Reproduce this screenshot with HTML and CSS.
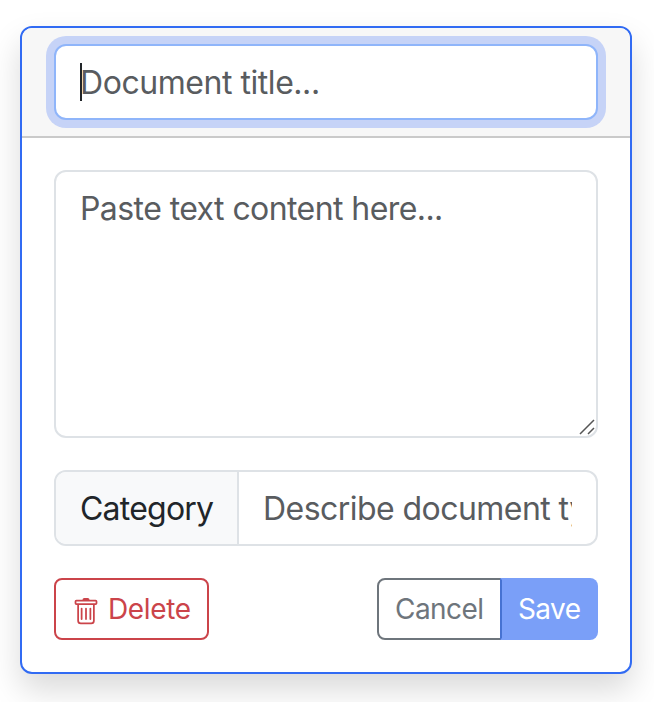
FILE: index.html
```html
<!DOCTYPE html>
<html lang="en">
<head>
<meta charset="utf-8">
<title>Document</title>
<link rel="stylesheet" href="styles.css">
</head>
<body>
<main class="card">
  <header class="card-header">
    <div class="control focused"><span class="caret"></span><span class="placeholder t-title">Document title...</span></div>
  </header>
  <div class="card-body">
    <div class="control area"><span class="placeholder t-paste">Paste text content here...</span>
      <svg class="grip" viewBox="0 0 16 16"><path d="M1 15L15 1M9 15L15 9"/></svg>
    </div>
    <div class="group">
      <div class="addon"><span class="t-category">Category</span></div>
      <div class="group-input"><div class="clip"><span class="placeholder t-describe">Describe document type</span></div></div>
    </div>
    <div class="actions">
      <button class="btn delete">
        <svg class="trash" viewBox="0 0 16 16"><path d="M5.5 5.5A.5.5 0 0 1 6 6v6a.5.5 0 0 1-1 0V6a.5.5 0 0 1 .5-.5m2.5 0a.5.5 0 0 1 .5.5v6a.5.5 0 0 1-1 0V6a.5.5 0 0 1 .5-.5m3 .5a.5.5 0 0 0-1 0v6a.5.5 0 0 0 1 0z"/><path d="M14.5 3a1 1 0 0 1-1 1H13v9a2 2 0 0 1-2 2H5a2 2 0 0 1-2-2V4h-.5a1 1 0 0 1-1-1V2a1 1 0 0 1 1-1H6a1 1 0 0 1 1-1h2a1 1 0 0 1 1 1h3.5a1 1 0 0 1 1 1zM4.118 4 4 4.059V13a1 1 0 0 0 1 1h6a1 1 0 0 0 1-1V4.059L11.882 4zM2.5 3h11V2h-11z"/></svg>
        <span class="t-delete">Delete</span>
      </button>
      <div class="btn-group">
        <button class="btn cancel"><span class="t-cancel">Cancel</span></button>
        <button class="btn save"><span class="t-save">Save</span></button>
      </div>
    </div>
  </div>
</main>
</body>
</html>
```
FILE: styles.css
```css
* { box-sizing: border-box; }
body {
  margin: 0;
  padding: 26px 22px 28px 20px;
  height: 702px;
  overflow: hidden;
  background: #fff;
  color: #212529;
  font: 400 32px/48px Inter, "Liberation Sans", sans-serif;
  white-space: nowrap;
}
.card {
  height: 648px;
  border: 2px solid #316bf3;
  border-radius: 12px;
  background: #fff;
  box-shadow: 0 16px 32px rgba(0, 0, 0, .15);
}
.card-header {
  height: 110px;
  padding: 16px 32px;
  border-bottom: 2px solid #cacaca;
  border-radius: 10px 10px 0 0;
  background: #f7f7f7;
}
.card-body {
  display: flex;
  flex-direction: column;
  gap: 32px;
  padding: 32px;
}
.control {
  position: relative;
  display: flex;
  height: 76px;
  padding: 13px 24px 11px;
  border: 2px solid #dee2e6;
  border-radius: 12px;
  background: #fff;
}
.focused {
  border-color: #8fb5fa;
  box-shadow: 0 0 0 8px #c6d3f7;
}
.placeholder { color: #595c5f; }
.caret {
  position: absolute;
  left: 24px;
  top: 17px;
  width: 2px;
  height: 38px;
  background: #212529;
}
.area { height: 268px; }
.grip {
  position: absolute;
  right: 1px;
  bottom: 1px;
  width: 16px;
  height: 16px;
  fill: none;
  stroke: #555;
  stroke-width: 1.5;
}
.group {
  display: flex;
  height: 76px;
  border: 2px solid #dee2e6;
  border-radius: 12px;
  overflow: hidden;
}
.addon {
  width: 183px;
  padding: 13px 24px 11px;
  border-right: 2px solid #dee2e6;
  background: #f8f9fa;
}
.group-input {
  flex: 1;
  min-width: 0;
  padding: 13px 24px 11px;
}
.clip { overflow: hidden; }
.actions {
  display: flex;
  justify-content: space-between;
}
.btn-group { display: flex; }
.btn {
  display: flex;
  align-items: center;
  height: 62px;
  margin: 0;
  padding: 0 16px;
  border: 2px solid;
  border-radius: 8px;
  background: #fff;
  font: 400 28px/42px Inter, "Liberation Sans", sans-serif;
}
.delete {
  width: 155px;
  gap: 8px;
  border-color: #cb444a;
  color: #cb444a;
}
.trash {
  flex: none;
  width: 28px;
  height: 28px;
  margin-top: 5px;
  fill: currentColor;
}
.cancel {
  width: 125px;
  border-color: #6e757c;
  border-radius: 8px 0 0 8px;
  color: #6e757c;
}
.save {
  width: 98px;
  margin-left: -2px;
  border-color: #7a9ff8;
  border-left-color: #4672d2;
  border-radius: 0 8px 8px 0;
  background: #7a9ff8;
  color: #fff;
}
.t-title { letter-spacing: -.45px; }
.t-paste { letter-spacing: -.58px; }
.t-category { letter-spacing: -.78px; }
.t-describe { letter-spacing: -.55px; }
.t-delete { letter-spacing: -.35px; }
.t-cancel { letter-spacing: -.55px; }
.t-save { letter-spacing: -.6px; }
```
